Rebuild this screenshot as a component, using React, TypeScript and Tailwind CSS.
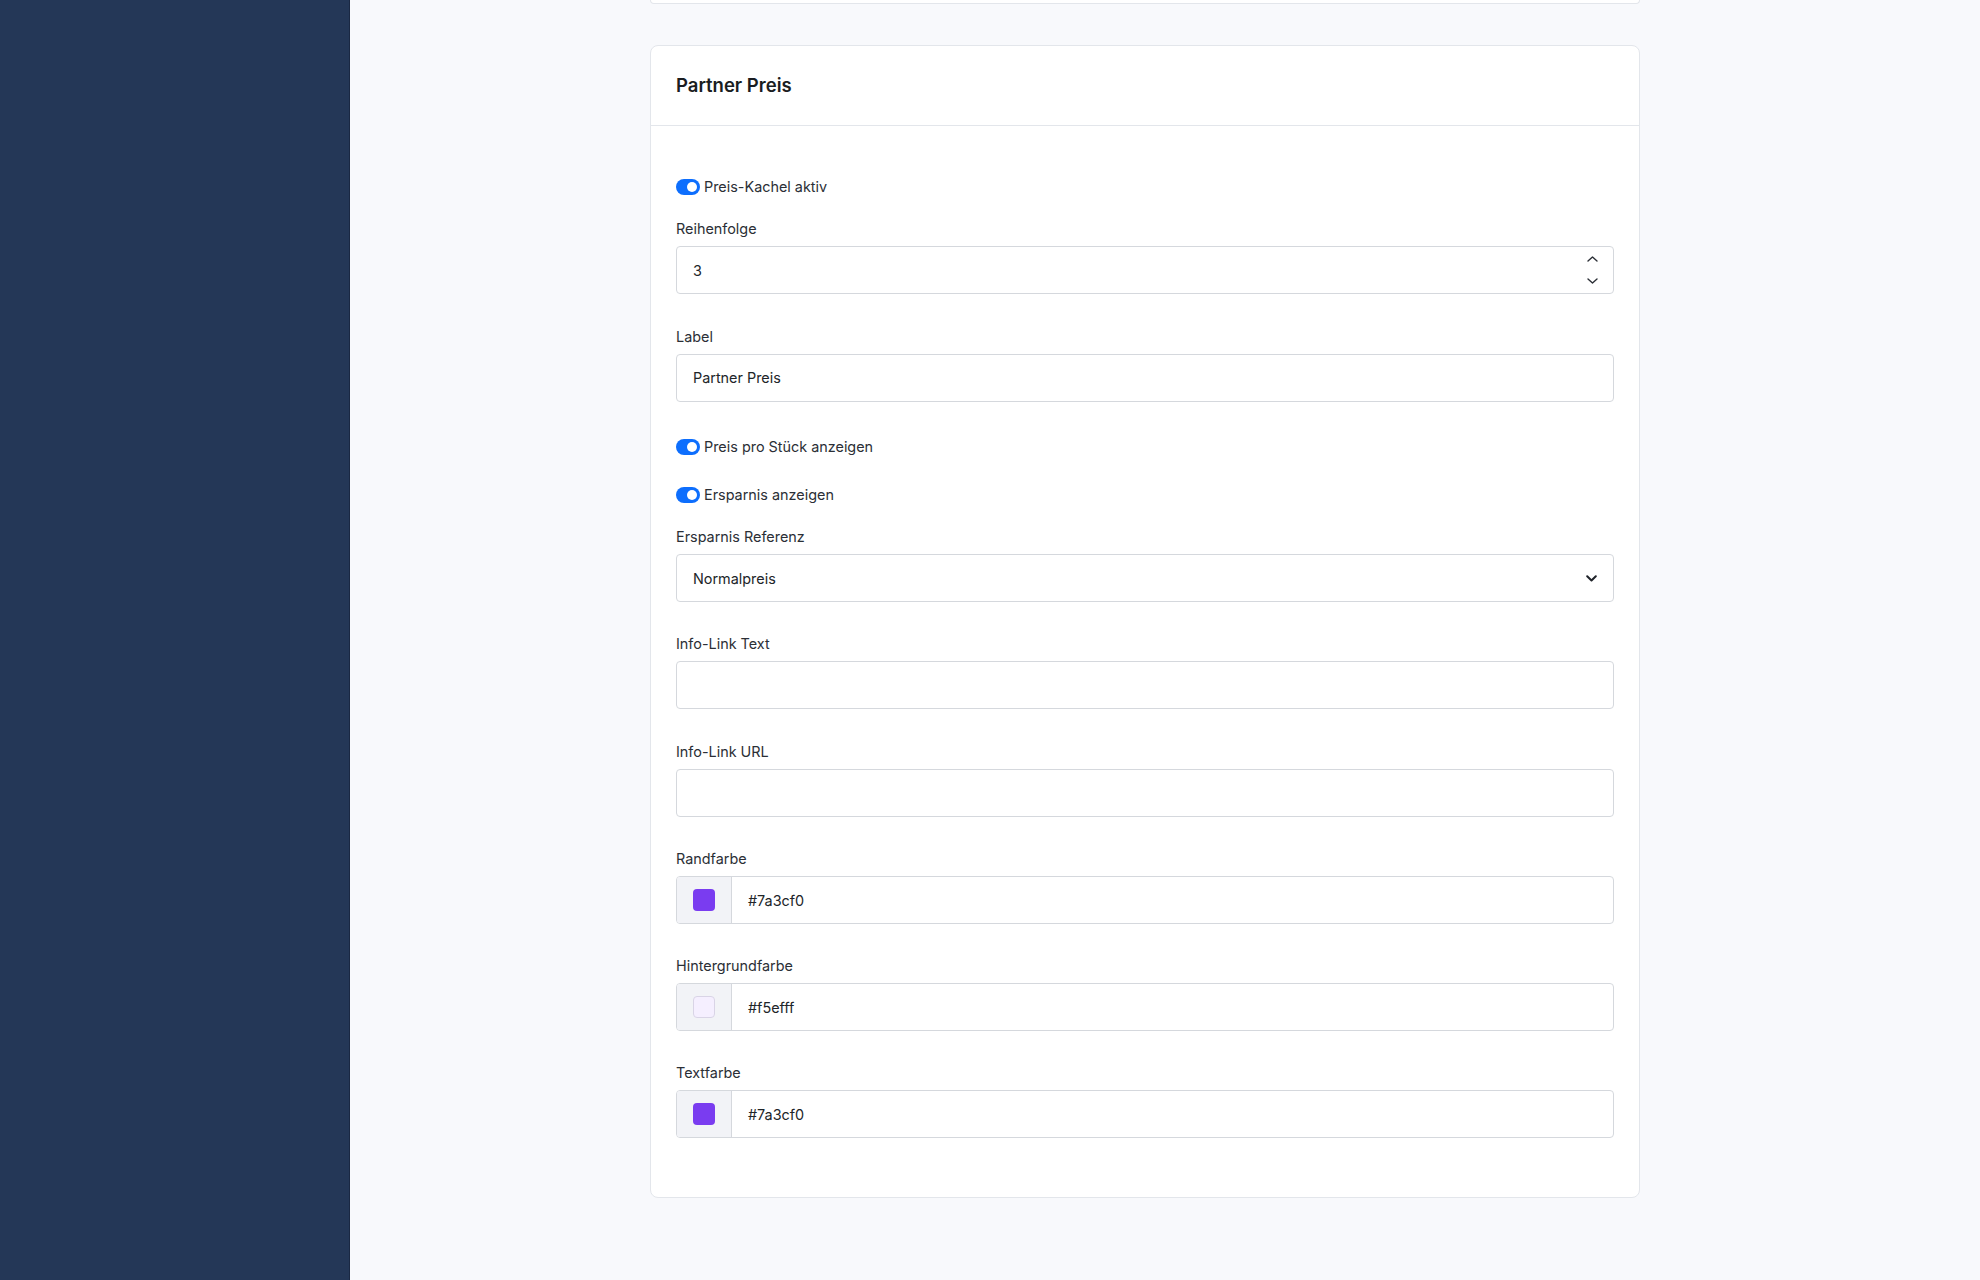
import React from "react";

function Toggle({ label, className }: { label: string; className: string }) {
  return (
    <div className={`flex h-[24px] items-center ${className}`}>
      <span className="relative inline-block h-[16px] w-[24px] rounded-full bg-[#0d6efd]">
        <span className="absolute right-[3px] top-[3px] h-[10px] w-[10px] rounded-full bg-white" />
      </span>
      <span className="ml-[4px] text-[14.4px] leading-[20px] text-[#2b2f36]">{label}</span>
    </div>
  );
}

function FieldLabel({ children }: { children: React.ReactNode }) {
  return <div className="mb-[7px] h-[20px] text-[14.4px] leading-[20px] text-[#2b2f36]">{children}</div>;
}

function TextField({ label, value, className }: { label: string; value?: string; className: string }) {
  return (
    <div className={className}>
      <FieldLabel>{label}</FieldLabel>
      <div className="flex h-[48px] items-center rounded-[4px] border border-[#d5d8dd] bg-white px-4 pt-[1px] text-[14.4px] text-[#212529]">
        {value}
      </div>
    </div>
  );
}

function NumberField({ label, value, className }: { label: string; value: string; className: string }) {
  return (
    <div className={className}>
      <FieldLabel>{label}</FieldLabel>
      <div className="flex h-[48px] items-center justify-between rounded-[4px] border border-[#d5d8dd] bg-white pl-4 pr-[15px] text-[14.4px] text-[#212529]">
        <span className="pt-[1px]">{value}</span>
        <span className="flex flex-col items-center gap-[16px]">
          <svg width="11" height="6" viewBox="0 0 11 6" fill="none">
            <path d="M1 5 L5.5 1 L10 5" stroke="#2b2f36" strokeWidth="1.4" strokeLinecap="round" strokeLinejoin="round" />
          </svg>
          <svg width="11" height="6" viewBox="0 0 11 6" fill="none">
            <path d="M1 1 L5.5 5 L10 1" stroke="#2b2f36" strokeWidth="1.4" strokeLinecap="round" strokeLinejoin="round" />
          </svg>
        </span>
      </div>
    </div>
  );
}

function SelectField({ label, value, className }: { label: string; value: string; className: string }) {
  return (
    <div className={className}>
      <FieldLabel>{label}</FieldLabel>
      <div className="flex h-[48px] items-center justify-between rounded-[4px] border border-[#d5d8dd] bg-white pl-4 pr-[16px] text-[14.4px] text-[#212529]">
        <span className="pt-[1px]">{value}</span>
        <svg width="11" height="7" viewBox="0 0 11 7" fill="none">
          <path d="M1.2 1.2 L5.5 5.5 L9.8 1.2" stroke="#1f2329" strokeWidth="2" strokeLinecap="round" strokeLinejoin="round" />
        </svg>
      </div>
    </div>
  );
}

function ColorField({
  label,
  value,
  swatch,
  light,
  className,
}: {
  label: string;
  value: string;
  swatch: string;
  light?: boolean;
  className: string;
}) {
  return (
    <div className={className}>
      <FieldLabel>{label}</FieldLabel>
      <div className="flex h-[48px] items-stretch overflow-hidden rounded-[4px] border border-[#d5d8dd] bg-white text-[14.4px] text-[#212529]">
        <div className="flex w-[55px] shrink-0 items-center justify-center border-r border-[#d5d8dd] bg-[#f2f3f7]">
          <span
            className={`block h-[22px] w-[22px] rounded-[4px] ${light ? "border border-[#d9d4e6]" : ""}`}
            style={{ backgroundColor: swatch }}
          />
        </div>
        <div className="flex items-center pl-4 pt-[1px]">{value}</div>
      </div>
    </div>
  );
}

export default function App() {
  return (
    <div
      className="flex h-[1280px] w-full overflow-hidden bg-[#f8f9fc]"
      style={{ fontFamily: "Inter, 'Noto Sans', sans-serif" }}
    >
      <aside className="h-full w-[350px] shrink-0 border-r border-[#1a2843] bg-[#243757]" />

      <main className="flex-1">
        {/* previous settings card, scrolled mostly out of view */}
        <div className="ml-[300px] h-[4px] w-[990px] rounded-b-lg border-x border-b border-[#e3e6eb] bg-white" />

        <section className="ml-[300px] mt-[41px] w-[990px] rounded-lg border border-[#e3e6eb] bg-white">
          <header className="flex h-[80px] items-center border-b border-[#e3e6eb] px-[25px]">
            <h2 className="text-[18.5px] font-semibold text-[#1a1d21]">Partner Preis</h2>
          </header>

          <div className="px-[25px] pb-[59px] pt-[49px]">
            <Toggle label="Preis-Kachel aktiv" className="mb-[20px]" />
            <NumberField label="Reihenfolge" value="3" className="mb-[32.5px]" />
            <TextField label="Label" value="Partner Preis" className="mb-[33.5px]" />
            <Toggle label="Preis pro Stück anzeigen" className="mb-[24px]" />
            <Toggle label="Ersparnis anzeigen" className="mb-[20px]" />
            <SelectField label="Ersparnis Referenz" value="Normalpreis" className="mb-[32.3px]" />
            <TextField label="Info-Link Text" className="mb-[32.3px]" />
            <TextField label="Info-Link URL" className="mb-[32.3px]" />
            <ColorField label="Randfarbe" value="#7a3cf0" swatch="#7a3cf0" className="mb-[32.3px]" />
            <ColorField label="Hintergrundfarbe" value="#f5efff" swatch="#f5efff" light className="mb-[32.3px]" />
            <ColorField label="Textfarbe" value="#7a3cf0" swatch="#7a3cf0" className="" />
          </div>
        </section>
      </main>
    </div>
  );
}
